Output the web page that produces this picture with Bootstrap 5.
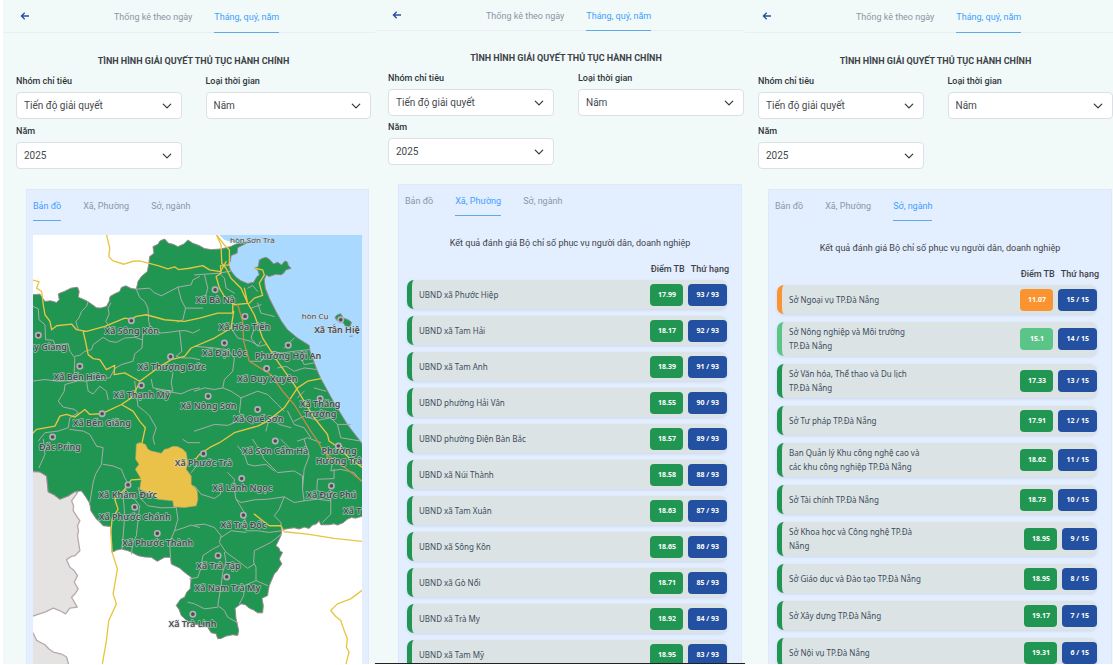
<!DOCTYPE html>
<html lang="vi">
<head>
<meta charset="utf-8">
<meta name="viewport" content="width=device-width, initial-scale=1">
<title>Tình hình giải quyết thủ tục hành chính</title>
<link rel="stylesheet" href="https://cdn.jsdelivr.net/npm/bootstrap@5.3.0/dist/css/bootstrap.min.css">
<style>
  body { font-family: Roboto, "Liberation Sans", sans-serif; font-size: 9px; line-height: 14px; color: #3d4248; background: #fff; }
  .screens { display: grid; grid-template-columns: 375fr 370fr 368fr; height: calc(100vh - 1px); overflow: hidden; }
  .screen { --row-gap: 7px; --top: 30px; background: #f1faf9; min-width: 0; overflow: hidden; }
  .screen.tall { --top: 32px; --row-gap: 8px; }
  .screen-first { border-left: 3px solid #fff; }
  .screen-mid { border-bottom: 1px solid #222; }
  .topbar { height: calc(var(--top) + 1px); border-bottom: 1px solid #e9eff0; padding-left: 17px; }
  .back { color: #24509c; line-height: 0; margin-bottom: 1px; }
  .tabs { display: flex; gap: 22px; height: 100%; }
  .tabs a { color: #8d95a3; text-decoration: none; display: flex; align-items: center; border-bottom: 1px solid transparent; white-space: nowrap; padding-top: 2px; }
  .tabs a.active { color: #409eff; border-bottom-color: #5da9ec; }
  .topbar .tabs { margin-left: 84px; height: calc(var(--top) + 1px); }
  .filters { padding: 20px 1px 0 13px; }
  .screen-first .filters { padding-right: 4px; }
  .screen-last .filters { padding-right: 0; }
  .tall .filters { padding-top: 21px; }
  .filters h1 { font-size: 9px; line-height: 14px; font-weight: 700; margin: 0 0 6px; text-align: center; }
  .fields { display: grid; grid-template-columns: 1fr 1fr; column-gap: 24px; row-gap: 4px; }
  .tall .fields { row-gap: 5px; }
  .fields label { display: block; font-weight: 500; color: #2f343a; margin-bottom: 4px; }
  .fields .form-select { height: 27px; padding: 0 24px 0 7px; font-size: 10px; line-height: 14px; color: #45494e; border: 1px solid #dcdfe3; border-radius: 4px; background-position: right 9px center; background-size: 10px 10px; }
  .panel { background: #e3eeff; border: 1px solid #dde9fb; margin: 19px 3px 0 23px; padding: 0 6px; min-height: 500px; }
  .tall .panel { margin-top: 20px; margin-right: 1px; }
  .screen-first .panel { margin-right: 6px; }
  .panel .tabs { height: 31px; }
  .panel h2 { font-size: 9px; line-height: 14px; font-weight: 400; text-align: center; margin: 20px 0 12px; }
  .heads { display: flex; justify-content: flex-end; gap: 6px; padding-right: 6px; font-weight: 500; margin-bottom: 4px; }
  .scores { list-style: none; margin: 0 8px 0 2px; padding: 0; display: flex; flex-direction: column; gap: var(--row-gap); }
  .scores li { display: flex; align-items: center; gap: 5px; min-height: 29px; padding: 3px 0 3px 7px; border-left: 5px solid #219653; border-radius: 7px; background: #dbe3e4; box-shadow: 0 1px 3px rgba(60, 90, 140, .15); font-family: "Noto Sans", "Open Sans", sans-serif; font-size: 8px; line-height: 14px; color: #3c4c5c; }
  .scores li > span:first-child { width: 136px; margin-right: auto; }
  .pill { font-size: 7px; font-weight: 700; line-height: 22px; padding: 0 7px; border-radius: 4px; color: #fff; background: #219653; white-space: nowrap; min-width: 33px; text-align: center; }
  .rank { background: #2350a0; padding: 0 8px; }
  .scores .orange { border-left-color: #f99430; } .orange .pill:not(.rank) { background: #f99430; }
  .scores .mint { border-left-color: #5bc588; } .mint .pill:not(.rank) { background: #5bc588; }
  .map { display: block; width: 100%; height: auto; margin-top: 14px; background: #fff; }
  .map text { font-family: "Noto Sans", sans-serif; font-size: 9px; font-weight: 600; fill: #4a4a54; stroke: #d5ddd8; stroke-opacity: .65; stroke-width: 1.5px; paint-order: stroke; stroke-linejoin: round; }
  .map .isle { font-size: 8px; font-weight: 400; }
</style>
</head>
<body>
<main class="screens">

<section class="screen screen-first tall">
  <header class="topbar d-flex align-items-center">
    <button class="back btn p-0 border-0" type="button" aria-label="Quay lại"><svg width="10" height="10" viewBox="0 0 10 10" fill="none" stroke="currentColor" stroke-width="1.3"><path d="M9 5H1.5M4.7 1.7 1.4 5l3.3 3.3"/></svg></button>
    <nav class="tabs"><a href="#">Thống kê theo ngày</a><a class="active" href="#">Tháng, quý, năm</a></nav>
  </header>
  <div class="filters">
    <h1>TÌNH HÌNH GIẢI QUYẾT THỦ TỤC HÀNH CHÍNH</h1>
    <div class="fields">
      <div><label for="a1">Nhóm chỉ tiêu</label><select class="form-select" id="a1"><option>Tiến độ giải quyết</option></select></div>
      <div><label for="a2">Loại thời gian</label><select class="form-select" id="a2"><option>Năm</option></select></div>
      <div><label for="a3">Năm</label><select class="form-select" id="a3"><option>2025</option></select></div>
    </div>
  </div>
  <div class="panel">
    <nav class="tabs"><a class="active" href="#">Bản đồ</a><a href="#">Xã, Phường</a><a href="#">Sở, ngành</a></nav>
    <svg class="map" viewBox="33 235 330 430" role="img" aria-label="Bản đồ">
      <g transform="translate(25 225) scale(.33333)" stroke-linejoin="round" stroke-linecap="round">
        <path fill="#a9d9fe" d="M582 28H1016V670H700L600 300V45z"/>
        <path fill="#fff" d="M500 28H582L600 45 640 55 610 90 500 80z"/>
        <g fill="#e4e3e1" stroke="#b8a9b0" stroke-width="4">
          <path d="M20 743 45 743 65 755 70 803 88 812 105 825 130 815 150 802 158 805 140 830 146 845 145 860 165 890 158 905 161 920 158 935 165 980 150 995 138 998 125 1007 135 1030 146 1038 158 1055 148 1075 160 1095 152 1108 140 1120 157 1150 135 1153 122 1170 104 1160 85 1153 60 1165 20 1178z"/>
          <path d="M20 1220 35 1250 60 1263 72 1276 85 1285 110 1291 125 1300 132 1325H20z"/>
        </g>
        <path fill="#219653" stroke="#96898e" stroke-width="3" d="M20 210 45 208 60 230 77 228 95 233 103 225 100 207 118 200 138 190 158 187 163 200 160 217 185 228 203 240 215 249 228 250 245 245 253 230 256 215 270 207 285 200 290 188 303 183 320 191 335 193 340 170 350 155 368 140 372 120 375 95 388 85 385 65 400 58 406 48 420 42 432 55 446 58 460 65 478 57 490 45 505 55 525 62 540 71 560 74 590 72 618 65 640 55 660 52 675 50 660 58 640 68 638 85 620 92 618 110 612 118 618 135 625 145 635 157 650 168 670 176 688 172 698 155 705 150 700 135 690 130 702 125 705 105 715 100 725 97 735 103 748 117 760 112 772 120 782 108 790 112 792 122 801 130 785 135 778 145 770 150 755 148 735 155 725 150 720 165 723 190 735 220 755 260 772 290 790 315 820 340 855 362 858 382 865 400 878 435 890 462 930 535 970 600 1016 660V876L995 882 982 880 970 885 957 896 940 903 930 899 915 902 890 902 885 890 878 899 865 903 855 913 840 909 825 915 810 911 795 913 773 917 770 935 755 965 764 972 768 982 775 985 765 1005 773 1020 764 1032 758 1042 750 1050 735 1085 732 1100 730 1115 713 1123 717 1145 715 1167 700 1167 687 1158 675 1153 662 1142 650 1140 632 1153 635 1185 643 1220 640 1235 625 1233 605 1237 590 1244 580 1245 575 1230 560 1227 548 1207 525 1203 505 1201 490 1193 470 1175 464 1158 455 1145 468 1126 480 1120 487 1104 497 1095 500 1060 480 1045 465 1032 440 1020 438 1000 420 1000 398 1012 380 1000 360 999 340 995 325 987 310 980 290 975 276 978 262 985 260 940 258 907 235 905 225 894 215 885 198 860 196 845 193 835 184 820 170 800 150 802 130 815 105 825 88 812 70 803 65 755 45 743 20 740z"/>
        <path fill="#219653" stroke="#96898e" stroke-width="3" d="M933 277 940 270 950 267 958 280 972 285 982 292 979 305 965 305 955 291 940 288zM928 301 932 299M978 335 985 334"/>
        <path fill="none" stroke="#a9aca7" stroke-width="3" d="M20 243 40 252 42 285 60 300 62 345 85 347 90 360 130 357 135 380 150 400 148 440 155 470M190 230 185 245 170 260 162 280 153 290 160 315M258 235 250 250 253 268 243 290 258 310M335 193 345 218 360 230 370 250 372 290 380 315 410 325 440 322 465 318 485 318 505 325 525 315M335 193 375 190 388 203 410 213 460 187 500 180 505 165 525 155M460 187 470 225 483 250 475 285 458 292M483 250 535 250M355 325 352 370 330 388 325 410 290 420 270 432 255 460 220 462 185 470M352 345 330 338 300 340 275 353 255 350 235 338 205 360 200 375 180 380 165 392 150 395M20 470 60 465 100 470 150 468 185 470 190 500 205 508 225 485 245 500 250 525M155 470 120 480 118 500 100 530 115 548 150 555 160 565 135 580 130 610 100 620 60 625 40 650M135 615 175 620 195 630 215 665M465 320 472 380 455 395 472 400 500 400 525 405M445 445 440 475 445 500 410 495 385 490 380 465M395 495 470 508 500 495 525 490M330 470 340 545 360 560 375 575 395 610 385 640 390 660"/>
        <path fill="none" stroke="#a9aca7" stroke-width="3" d="M55 645 60 690 42 730M215 665 235 670 230 720 212 750 205 775 195 835M235 720 265 725 290 735 300 760 310 780 295 810 300 875 292 975M310 815 330 825 345 845 335 935 325 955 320 990M340 790 350 825 370 845 410 851 455 850 460 885 450 920 435 955 438 1000M450 920 475 912 500 903 525 910M475 645 490 655 525 655"/>
        <g transform="translate(510)" fill="none" stroke="#a9aca7" stroke-width="3"><path d="M0 150 30 148 75 145 90 160 95 190 120 205M75 145 110 138M30 150 40 190 30 225M190 235 200 265 220 270 240 275M110 310 130 340 170 350 195 365 215 360M180 310 170 340 190 365 200 350M0 365 60 370 100 375 120 400 115 440 90 465 85 490 110 500 140 520 135 565 160 590M140 520 190 500 220 510 250 540 270 560M85 490 60 495 30 490 0 500M230 380 262 385 300 380 345 375M250 430 275 425 300 440 330 430 370 435M215 390 200 410 165 410M300 340 270 370M330 500 310 520M0 620 60 600 100 603 130 590M300 590 330 575 370 588 410 580 430 600 470 600M280 560 300 600 330 610 350 640M430 600 440 640 500 650M160 190 175 182 190 200M170 250 200 240M320 400 330 420 360 415M360 490 395 500M215 620 225 580 255 600 290 610M310 650 340 640 380 655"/></g>
        <g transform="translate(510 645)" fill="none" stroke="#a9aca7" stroke-width="3"><path d="M0 140 20 165 60 178 78 165 80 140M130 20 150 45 160 75 180 80 215 75 240 95M175 0 185 15 195 30 210 60 235 85 250 100 300 95 325 110 325 150 330 185 300 190 270 173 220 180 180 182 140 190 125 180 118 140 120 120 100 100M330 0 345 50 330 90 325 150M395 25 400 60 415 75 410 95 440 90 480 100 500 125M420 90 420 118 370 120 368 150 385 165 410 180 410 225 385 250M330 185 370 180 410 185M125 180 150 220 155 275 190 275 225 280 262 275M270 173 255 210 240 230 260 250 262 272M0 258 30 255 60 265 80 290 75 310 95 340 130 365 160 388 180 375M155 280 110 275 80 295M262 285 230 310 180 335 178 370 185 385 185 425 220 440M75 320 55 330 25 350 20 385 10 415 -15 420M90 340 95 370 85 400 80 440 70 500 90 515 100 535 130 552M185 425 150 440 148 470 135 495M-20 490 0 495 30 510 70 505M260 0 290 30 340 30M10 75 -10 100"/></g>
        <path fill="#eac24a" stroke="#b9a673" stroke-width="2" d="M345 655 362 660 370 675 380 680 410 687 420 675 430 673 445 666 460 667 475 675 485 685 490 715 485 735 500 755 500 780 512 790 518 800 520 825 515 845 480 850 447 848 445 830 400 825 372 808 345 795 350 765 332 735 343 720 333 705 335 660z"/>
        <g fill="none" stroke="#e8c540" stroke-width="4">
          <path d="M245 28 255 70 252 95 265 108 298 118 325 109 345 108 400 122 430 132 450 126 462 134 495 130 535 122 555 135 588 140 605 110M20 165 42 170 35 190 50 200 55 240 60 270 75 290 80 315 95 303 140 298 155 315 185 320 240 305 300 280 320 283 335 275 365 270 420 285 480 290 525 280 580 265 625 265 625 240M175 320 182 350 190 390 205 402 225 405 245 435 270 422 268 450 300 445 345 470 400 430 440 405 480 395 500 370 570 340 620 310 628 260M20 630 35 615 90 605 105 575 125 570 150 578 180 555 195 570 230 568 290 540 320 520 345 475M290 540 325 560 345 590 362 610 350 665M350 765 320 767 300 795 270 825 280 855 262 885 258 925 262 985 270 1010 278 1035 272 1070 265 1110 275 1140 252 1190 245 1250 232 1325"/>
          <path d="M575 28 590 60 592 115 605 130 620 160 650 190 670 235 690 270 715 340 760 410 810 480 870 580 910 630 915 650 940 667 980 705 1016 730M575 28 600 60 615 75 615 120 588 122 590 145 575 155 585 190 600 215 630 240 675 235 690 220 715 212 705 175 720 150 715 135 690 130M660 190 670 235M890 462 850 470 820 490 780 550 730 590 700 605 630 625 585 655 555 670 525 690 505 715M690 870 715 890 735 905 770 905 780 923 850 930 930 943 1016 952M1016 1098 980 1125 940 1140 920 1160 935 1178 950 1190 962 1225 970 1245 967 1270 975 1285 965 1325"/>
          <path stroke="#bc8f43" d="M640 240 655 290 658 350 675 410 740 450 775 500 810 540 860 620 880 650 900 685 950 720 1016 772"/>
        </g>
        <g fill="#4c4b55" stroke="#b5b0b6" stroke-width="5">
          <circle cx="320" cy="288" r="8"/><circle cx="40" cy="332" r="8"/><circle cx="165" cy="425" r="8"/><circle cx="438" cy="396" r="8"/><circle cx="350" cy="483" r="8"/><circle cx="232" cy="568" r="8"/><circle cx="83" cy="638" r="8"/><circle cx="572" cy="195" r="8"/><circle cx="662" cy="275" r="8"/><circle cx="600" cy="355" r="8"/><circle cx="792" cy="362" r="8"/><circle cx="727" cy="432" r="8"/><circle cx="551" cy="515" r="8"/><circle cx="700" cy="555" r="8"/><circle cx="888" cy="523" r="8"/><circle cx="950" cy="285" r="8"/><circle cx="753" cy="650" r="8"/><circle cx="310" cy="782" r="8"/><circle cx="330" cy="849" r="8"/><circle cx="398" cy="928" r="8"/><circle cx="505" cy="1171" r="8"/><circle cx="537" cy="688" r="8"/><circle cx="652" cy="763" r="8"/><circle cx="657" cy="873" r="8"/><circle cx="581" cy="995" r="8"/><circle cx="607" cy="1059" r="8"/><circle cx="943" cy="665" r="8"/><circle cx="922" cy="785" r="8"/>
        </g>
      </g>
      <g text-anchor="middle">
        <text class="isle" x="253" y="243">hòn Sơn Trà</text><text class="isle" x="316" y="319">hòn Cụ</text>
        <text x="132" y="334">Xã Sông Kôn</text><text x="80" y="380">Xã Bến Hiên</text><text x="172" y="370">Xã Thượng Đức</text><text x="142" y="399">Xã Thạnh Mỹ</text><text x="102" y="427">Xã Bến Giằng</text><text x="60" y="451">Đắc Pring</text><text x="209" y="410">Xã Nông Sơn</text>
        <text x="216" y="303">Xã Bà Nà</text><text x="245" y="330">Xã Hòa Tiến</text><text x="225" y="356">Xã Đại Lộc</text><text x="289" y="359">Phường Hội An</text><text x="268" y="382">Xã Duy Xuyên</text><text x="259" y="423">Xã Quế Sơn</text><text x="321" y="408">Xã Thăng</text><text x="321" y="418">Trường</text>
        <text x="276" y="455">Xã Sơn Cẩm Hà</text><text x="340" y="455">Phường</text><text x="340" y="465">Hương Trà</text><text x="204" y="467">Xã Phước Trà</text><text x="243" y="492">Xã Lãnh Ngọc</text><text x="128" y="499">Xã Khâm Đức</text><text x="135" y="521">Xã Phước Chánh</text><text x="158" y="547">Xã Phước Thành</text><text x="244" y="529">Xã Trà Đốc</text><text x="219" y="570">Xã Trà Tập</text><text x="228" y="592">Xã Nam Trà My</text><text x="193" y="628">Xã Trà Linh</text>
      </g>
      <text x="34" y="350">y Giang</text><text x="315" y="333">Xã Tân Hiệ</text><text x="307" y="499">Xã Đức Phú</text><text x="344" y="515">Xã T</text>
    </svg>
  </div>
</section>

<section class="screen screen-mid">
  <header class="topbar d-flex align-items-center">
    <button class="back btn p-0 border-0" type="button" aria-label="Quay lại"><svg width="10" height="10" viewBox="0 0 10 10" fill="none" stroke="currentColor" stroke-width="1.3"><path d="M9 5H1.5M4.7 1.7 1.4 5l3.3 3.3"/></svg></button>
    <nav class="tabs"><a href="#">Thống kê theo ngày</a><a class="active" href="#">Tháng, quý, năm</a></nav>
  </header>
  <div class="filters">
    <h1>TÌNH HÌNH GIẢI QUYẾT THỦ TỤC HÀNH CHÍNH</h1>
    <div class="fields">
      <div><label for="b1">Nhóm chỉ tiêu</label><select class="form-select" id="b1"><option>Tiến độ giải quyết</option></select></div>
      <div><label for="b2">Loại thời gian</label><select class="form-select" id="b2"><option>Năm</option></select></div>
      <div><label for="b3">Năm</label><select class="form-select" id="b3"><option>2025</option></select></div>
    </div>
  </div>
  <div class="panel">
    <nav class="tabs"><a href="#">Bản đồ</a><a class="active" href="#">Xã, Phường</a><a href="#">Sở, ngành</a></nav>
    <h2>Kết quả đánh giá Bộ chỉ số phục vụ người dân, doanh nghiệp</h2>
    <div class="heads"><span>Điểm TB</span><span>Thứ hạng</span></div>
    <ul class="scores">
      <li><span>UBND xã Phước Hiệp</span><span class="pill">17.99</span><span class="pill rank">93 / 93</span></li>
      <li><span>UBND xã Tam Hải</span><span class="pill">18.17</span><span class="pill rank">92 / 93</span></li>
      <li><span>UBND xã Tam Anh</span><span class="pill">18.39</span><span class="pill rank">91 / 93</span></li>
      <li><span>UBND phường Hải Vân</span><span class="pill">18.55</span><span class="pill rank">90 / 93</span></li>
      <li><span>UBND phường Điện Bàn Bắc</span><span class="pill">18.57</span><span class="pill rank">89 / 93</span></li>
      <li><span>UBND xã Núi Thành</span><span class="pill">18.58</span><span class="pill rank">88 / 93</span></li>
      <li><span>UBND xã Tam Xuân</span><span class="pill">18.63</span><span class="pill rank">87 / 93</span></li>
      <li><span>UBND xã Sông Kôn</span><span class="pill">18.65</span><span class="pill rank">86 / 93</span></li>
      <li><span>UBND xã Gò Nổi</span><span class="pill">18.71</span><span class="pill rank">85 / 93</span></li>
      <li><span>UBND xã Trà My</span><span class="pill">18.92</span><span class="pill rank">84 / 93</span></li>
      <li><span>UBND xã Tam Mỹ</span><span class="pill">18.95</span><span class="pill rank">83 / 93</span></li>
    </ul>
  </div>
</section>

<section class="screen screen-last tall">
  <header class="topbar d-flex align-items-center">
    <button class="back btn p-0 border-0" type="button" aria-label="Quay lại"><svg width="10" height="10" viewBox="0 0 10 10" fill="none" stroke="currentColor" stroke-width="1.3"><path d="M9 5H1.5M4.7 1.7 1.4 5l3.3 3.3"/></svg></button>
    <nav class="tabs"><a href="#">Thống kê theo ngày</a><a class="active" href="#">Tháng, quý, năm</a></nav>
  </header>
  <div class="filters">
    <h1>TÌNH HÌNH GIẢI QUYẾT THỦ TỤC HÀNH CHÍNH</h1>
    <div class="fields">
      <div><label for="c1">Nhóm chỉ tiêu</label><select class="form-select" id="c1"><option>Tiến độ giải quyết</option></select></div>
      <div><label for="c2">Loại thời gian</label><select class="form-select" id="c2"><option>Năm</option></select></div>
      <div><label for="c3">Năm</label><select class="form-select" id="c3"><option>2025</option></select></div>
    </div>
  </div>
  <div class="panel">
    <nav class="tabs"><a href="#">Bản đồ</a><a href="#">Xã, Phường</a><a class="active" href="#">Sở, ngành</a></nav>
    <h2>Kết quả đánh giá Bộ chỉ số phục vụ người dân, doanh nghiệp</h2>
    <div class="heads"><span>Điểm TB</span><span>Thứ hạng</span></div>
    <ul class="scores">
      <li class="orange"><span>Sở Ngoại vụ TP.Đà Nẵng</span><span class="pill">11.07</span><span class="pill rank">15 / 15</span></li>
      <li class="mint"><span>Sở Nông nghiệp và Môi trường TP.Đà Nẵng</span><span class="pill">15.1</span><span class="pill rank">14 / 15</span></li>
      <li><span>Sở Văn hóa, Thể thao và Du lịch TP.Đà Nẵng</span><span class="pill">17.33</span><span class="pill rank">13 / 15</span></li>
      <li><span>Sở Tư pháp TP.Đà Nẵng</span><span class="pill">17.91</span><span class="pill rank">12 / 15</span></li>
      <li><span>Ban Quản lý Khu công nghệ cao và các khu công nghiệp TP.Đà Nẵng</span><span class="pill">18.62</span><span class="pill rank">11 / 15</span></li>
      <li><span>Sở Tài chính TP.Đà Nẵng</span><span class="pill">18.73</span><span class="pill rank">10 / 15</span></li>
      <li><span>Sở Khoa học và Công nghệ TP.Đà Nẵng</span><span class="pill">18.95</span><span class="pill rank">9 / 15</span></li>
      <li><span>Sở Giáo dục và Đào tạo TP.Đà Nẵng</span><span class="pill">18.95</span><span class="pill rank">8 / 15</span></li>
      <li><span>Sở Xây dựng TP.Đà Nẵng</span><span class="pill">19.17</span><span class="pill rank">7 / 15</span></li>
      <li><span>Sở Nội vụ TP.Đà Nẵng</span><span class="pill">19.31</span><span class="pill rank">6 / 15</span></li>
    </ul>
  </div>
</section>
</main>
<script src="https://cdn.jsdelivr.net/npm/bootstrap@5.3.0/dist/js/bootstrap.bundle.min.js"></script>
</body>
</html>
